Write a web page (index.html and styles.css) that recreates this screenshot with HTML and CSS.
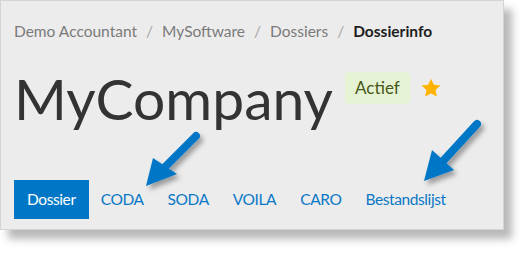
FILE: index.html
```html
<!DOCTYPE html>
<html lang="nl">
<head>
<meta charset="utf-8">
<title>Dossierinfo</title>
<link rel="stylesheet" href="styles.css">
</head>
<body>
<div class="panel">
  <nav class="crumbs">
    <span class="crumb">Demo Accountant</span><span class="sep">/</span>
    <span class="crumb">MySoftware</span><span class="sep">/</span>
    <span class="crumb">Dossiers</span><span class="sep">/</span>
    <span class="crumb current">Dossierinfo</span>
  </nav>
  <div class="heading">
    <h1 class="title">MyCompany</h1>
    <span class="badge">Actief</span>
    <svg class="star" viewBox="0 0 24 24" width="22" height="22"><path d="M12 1.8l3.1 6.6 7.2.9-5.3 5 1.4 7.1L12 17.9l-6.4 3.5 1.4-7.1-5.3-5 7.2-.9z" fill="#ffb300"/></svg>
  </div>
  <ul class="tabs">
    <li class="tab active">Dossier</li>
    <li class="tab">CODA</li>
    <li class="tab">SODA</li>
    <li class="tab">VOILA</li>
    <li class="tab">CARO</li>
    <li class="tab">Bestandslijst</li>
  </ul>
</div>
<svg class="annotations" width="527" height="253" viewBox="0 0 527 253">
  <defs>
    <filter id="sh" x="-50%" y="-50%" width="200%" height="200%">
      <feDropShadow dx="3" dy="4" stdDeviation="2.5" flood-color="#000" flood-opacity="0.35"/>
    </filter>
  </defs>
  <g filter="url(#sh)" fill="#0077c6" stroke="#0077c6">
    <line x1="196" y1="136" x2="164" y2="168" stroke-width="8" stroke-linecap="round"/>
    <polygon points="146,186 153,158 177,174" stroke="none"/>
    <line x1="477" y1="124" x2="444" y2="160" stroke-width="8" stroke-linecap="round"/>
    <polygon points="424,181 432,150 454,170" stroke="none"/>
  </g>
</svg>
</body>
</html>
```
FILE: styles.css
```css
html, body {
  margin: 0;
  padding: 0;
  background: #ffffff;
}
body {
  position: relative;
  width: 527px;
  height: 253px;
  overflow: hidden;
  font-family: "Lato", "Open Sans", sans-serif;
}
.panel {
  box-sizing: border-box;
  width: 504px;
  height: 230px;
  background: #ececec;
  border: 1px solid #d4d4d4;
  box-shadow: 8px 9px 8px rgba(0, 0, 0, 0.28);
  padding: 19px 13px 0 13px;
  display: flex;
  flex-direction: column;
}
.crumbs {
  display: flex;
  align-items: baseline;
  font-size: 15.5px;
  line-height: 22px;
  color: #7a7a7a;
}
.sep {
  color: #a8a8a8;
  margin: 0 9px;
}
.current {
  color: #1e1e1e;
  font-weight: 700;
}
.heading {
  display: flex;
  align-items: flex-start;
  margin-top: 30px;
}
.title {
  margin: 0;
  font-size: 57px;
  font-weight: 400;
  line-height: 70px;
  color: #333333;
  margin-top: -9px;
}
.badge {
  margin-left: 12px;
  background: #e6f2d4;
  color: #46581a;
  border-radius: 4px;
  font-size: 17px;
  line-height: 32px;
  height: 32px;
  padding: 0 10px;
}
.star {
  margin-left: 10px;
  margin-top: 5px;
}
.tabs {
  list-style: none;
  margin: 0;
  padding: 0;
  margin-top: auto;
  margin-bottom: 10px;
  display: flex;
}
.tab {
  font-size: 15.5px;
  letter-spacing: -0.4px;
  line-height: 39px;
  padding: 0 12px;
  color: #0a78c6;
}
.tab.active {
  background: #0077c6;
  color: #ffffff;
  padding: 0 13px;
}
.annotations {
  position: absolute;
  left: 0;
  top: 0;
  pointer-events: none;
}
```
